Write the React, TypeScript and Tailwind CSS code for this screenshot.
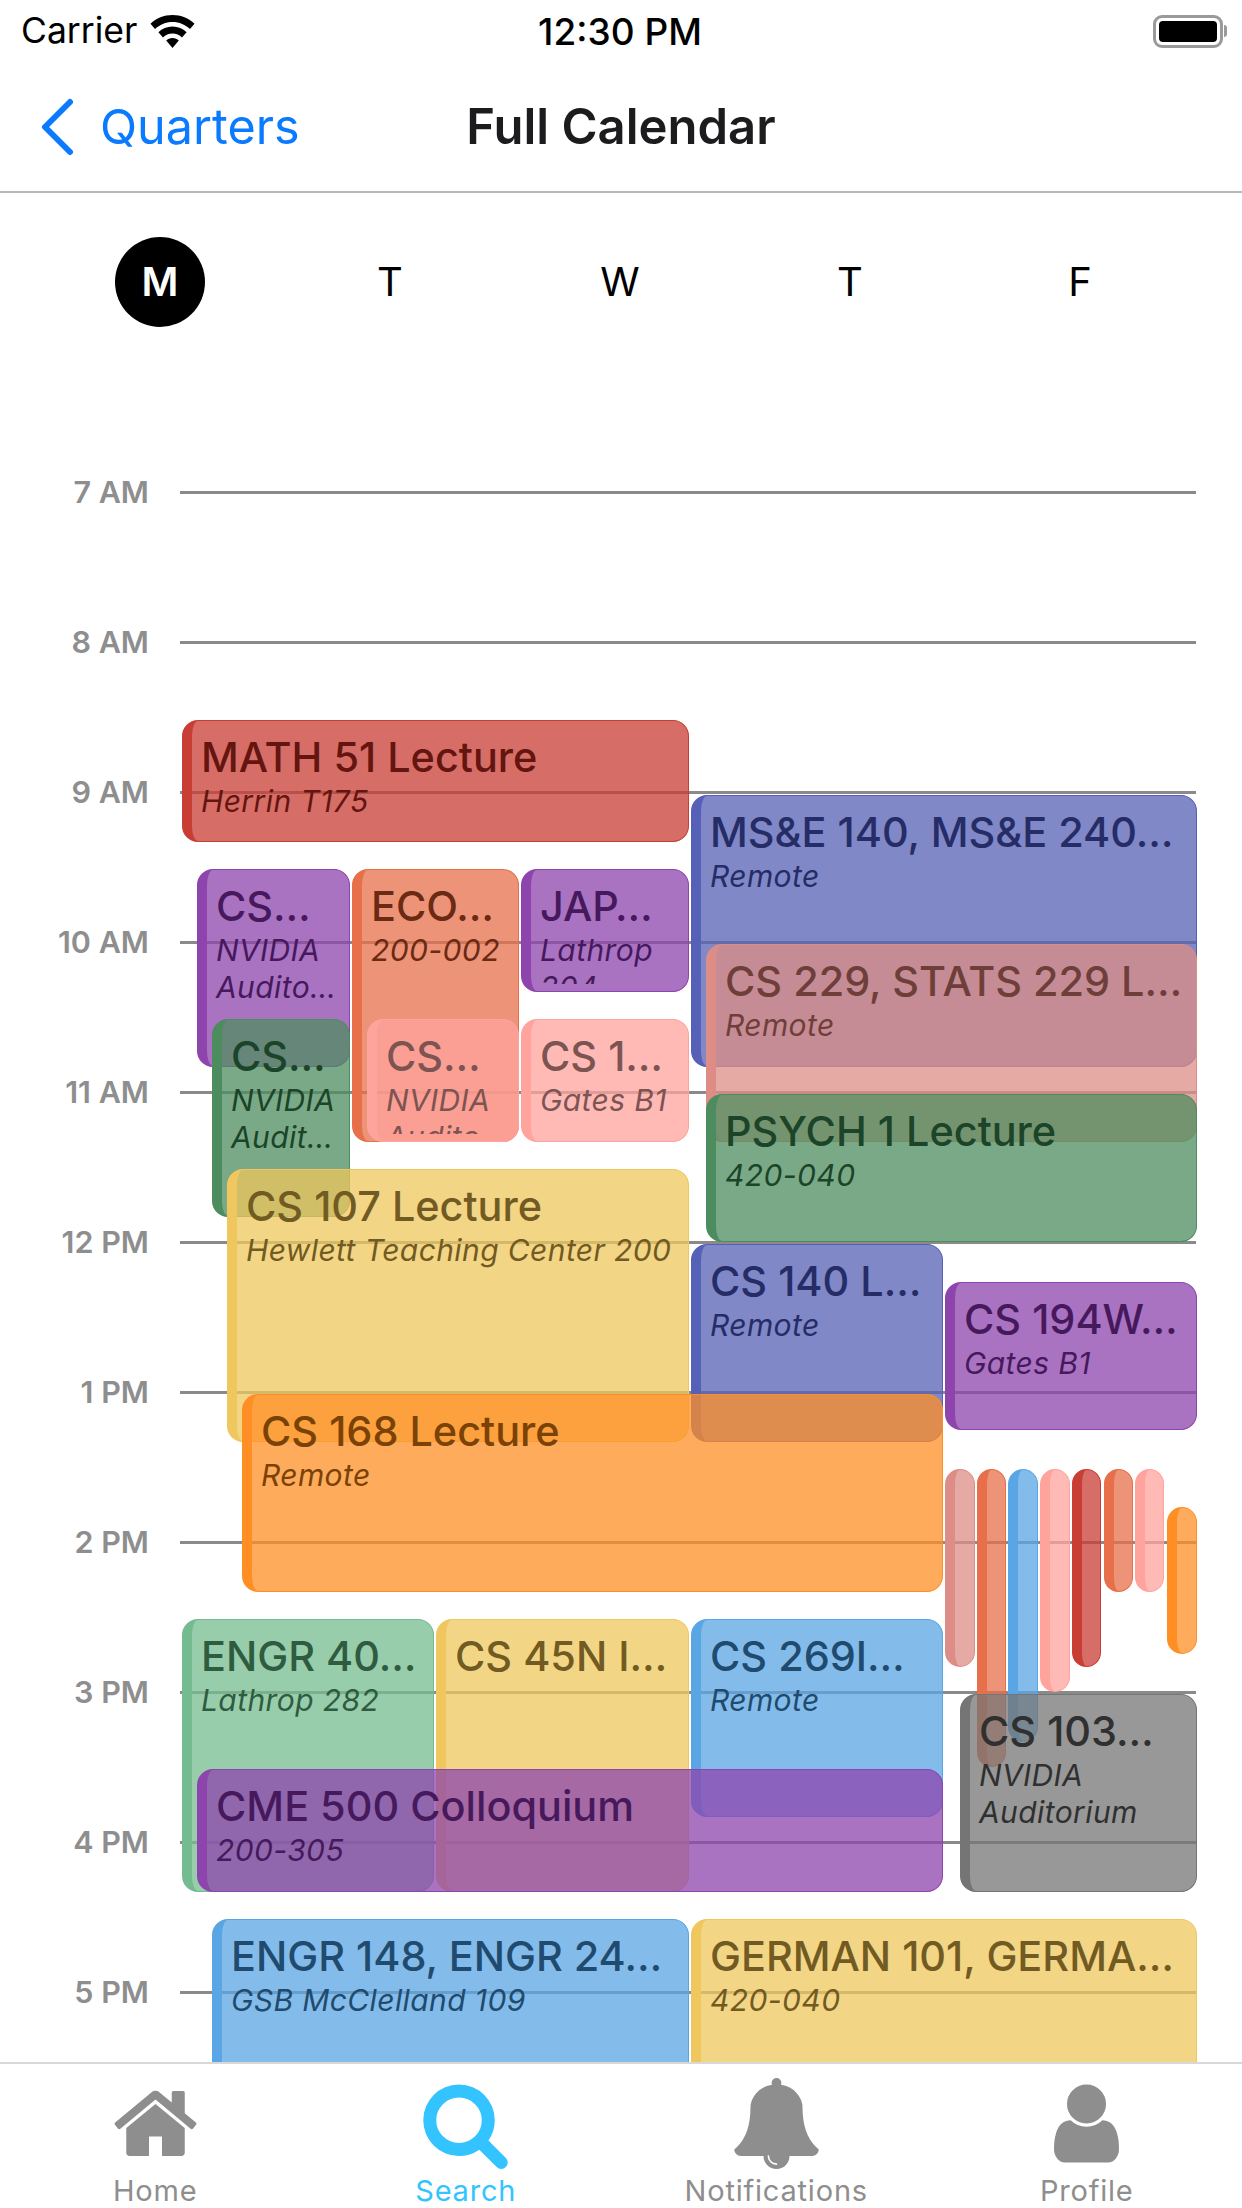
type Tone = { box: string; text: string };

const tones: Record<string, Tone> = {
  red: { box: 'bg-[#C83E34]/75 border-[#C83E34]', text: 'text-[#64150F]' },
  indigo: { box: 'bg-[#5660B6]/75 border-[#5660B6]', text: 'text-[#252C66]' },
  purple: { box: 'bg-[#8E44AD]/75 border-[#8E44AD]', text: 'text-[#46195C]' },
  coral: { box: 'bg-[#E76F4A]/75 border-[#E76F4A]', text: 'text-[#6A2A14]' },
  pink: { box: 'bg-[#FFA39D]/75 border-[#FFA39D]', text: 'text-[#7C5452]' },
  green: { box: 'bg-[#4D8C5F]/75 border-[#4D8C5F]', text: 'text-[#1B4428]' },
  yellow: { box: 'bg-[#EFC75E]/75 border-[#EFC75E]', text: 'text-[#715B22]' },
  dusty: { box: 'bg-[#DD8D86]/75 border-[#DD8D86]', text: 'text-[#6E3F39]' },
  orange: { box: 'bg-[#FF8F25]/75 border-[#FF8F25]', text: 'text-[#7A4207]' },
  mint: { box: 'bg-[#74BC8F]/75 border-[#74BC8F]', text: 'text-[#2F5C40]' },
  sky: { box: 'bg-[#5AA5E3]/75 border-[#5AA5E3]', text: 'text-[#214B6E]' },
  gray: { box: 'bg-[#757575]/75 border-[#757575]', text: 'text-[#303030]' },
};

// left, top, right, bottom in page pixels
type Item = { l: number; t: number; r: number; b: number; tone: string; title?: string; sub?: string[] };

const events: Item[] = [
  { l: 182, t: 720, r: 689, b: 842, tone: 'red', title: 'MATH 51 Lecture', sub: ['Herrin T175'] },
  { l: 691, t: 795, r: 1197, b: 1067, tone: 'indigo', title: 'MS&E 140, MS&E 240…', sub: ['Remote'] },
  { l: 197, t: 869, r: 350, b: 1067, tone: 'purple', title: 'CS…', sub: ['NVIDIA', 'Audito…'] },
  { l: 352, t: 869, r: 519, b: 1142, tone: 'coral', title: 'ECO…', sub: ['200-002'] },
  { l: 521, t: 869, r: 689, b: 992, tone: 'purple', title: 'JAP…', sub: ['Lathrop', '204'] },
  { l: 212, t: 1019, r: 350, b: 1217, tone: 'green', title: 'CS…', sub: ['NVIDIA', 'Audit…'] },
  { l: 367, t: 1019, r: 519, b: 1142, tone: 'pink', title: 'CS…', sub: ['NVIDIA', 'Audito'] },
  { l: 521, t: 1019, r: 689, b: 1142, tone: 'pink', title: 'CS 1…', sub: ['Gates B1'] },
  { l: 706, t: 944, r: 1197, b: 1142, tone: 'dusty', title: 'CS 229, STATS 229 L…', sub: ['Remote'] },
  { l: 706, t: 1094, r: 1197, b: 1242, tone: 'green', title: 'PSYCH 1 Lecture', sub: ['420-040'] },
  { l: 227, t: 1169, r: 689, b: 1442, tone: 'yellow', title: 'CS 107 Lecture', sub: ['Hewlett Teaching Center 200'] },
  { l: 691, t: 1244, r: 943, b: 1442, tone: 'indigo', title: 'CS 140 L…', sub: ['Remote'] },
  { l: 945, t: 1282, r: 1197, b: 1430, tone: 'purple', title: 'CS 194W…', sub: ['Gates B1'] },
  { l: 242, t: 1394, r: 943, b: 1592, tone: 'orange', title: 'CS 168 Lecture', sub: ['Remote'] },
  { l: 945, t: 1469, r: 975, b: 1667, tone: 'dusty' },
  { l: 977, t: 1469, r: 1006, b: 1767, tone: 'coral' },
  { l: 1008, t: 1469, r: 1038, b: 1742, tone: 'sky' },
  { l: 1040, t: 1469, r: 1070, b: 1692, tone: 'pink' },
  { l: 1072, t: 1469, r: 1101, b: 1667, tone: 'red' },
  { l: 1104, t: 1469, r: 1133, b: 1592, tone: 'coral' },
  { l: 1135, t: 1469, r: 1164, b: 1592, tone: 'pink' },
  { l: 1167, t: 1507, r: 1197, b: 1654, tone: 'orange' },
  { l: 960, t: 1694, r: 1197, b: 1892, tone: 'gray', title: 'CS 103…', sub: ['NVIDIA', 'Auditorium'] },
  { l: 182, t: 1619, r: 434, b: 1892, tone: 'mint', title: 'ENGR 40…', sub: ['Lathrop 282'] },
  { l: 436, t: 1619, r: 689, b: 1892, tone: 'yellow', title: 'CS 45N I…' },
  { l: 691, t: 1619, r: 943, b: 1817, tone: 'sky', title: 'CS 269I…', sub: ['Remote'] },
  { l: 197, t: 1769, r: 943, b: 1892, tone: 'purple', title: 'CME 500 Colloquium', sub: ['200-305'] },
  { l: 212, t: 1919, r: 689, b: 2120, tone: 'sky', title: 'ENGR 148, ENGR 24…', sub: ['GSB McClelland 109'] },
  { l: 691, t: 1919, r: 1197, b: 2120, tone: 'yellow', title: 'GERMAN 101, GERMA…', sub: ['420-040'] },
];

const hours = ['7 AM', '8 AM', '9 AM', '10 AM', '11 AM', '12 PM', '1 PM', '2 PM', '3 PM', '4 PM', '5 PM'];
const days = ['M', 'T', 'W', 'T', 'F'];

const CAL_TOP = 342;

function EventCard({ item }: { item: Item }) {
  const tone = tones[item.tone];
  return (
    <div
      className={`absolute flex overflow-hidden rounded-[16px] border-[1.5px] border-l-[10px] ${tone.box}`}
      style={{ left: item.l, top: item.t - CAL_TOP, width: item.r - item.l, height: item.b - item.t }}
    >
      {item.title && (
        <div className={`min-w-0 flex-1 pl-[9px] pt-[11px] mb-[7px] overflow-hidden ${tone.text}`}>
          <div className="whitespace-nowrap text-[41.4px] leading-[51px] font-medium">{item.title}</div>
          {item.sub?.map((line, i) => (
            <div key={i} className="whitespace-nowrap text-[30px] leading-[36.5px] italic tracking-[0.4px]">
              {line}
            </div>
          ))}
        </div>
      )}
    </div>
  );
}

function Wifi() {
  return (
    <svg viewBox="0 0 45 33" className="w-[45px] h-[33px]" fill="black">
      <path d="M22.500 0C14 0 6.300 3.300 0.500 8.700L5 14C9.500 9.600 15.700 6.900 22.500 6.900S35.500 9.600 40 14L44.500 8.700C38.700 3.300 31 0 22.500 0Z" />
      <path d="M22.500 11.500C17 11.500 12.100 13.700 8.400 17.300L13 22.500C15.500 20 18.800 18.500 22.500 18.500S29.500 20 32 22.500L36.600 17.300C32.900 13.700 28 11.500 22.500 11.500Z" />
      <path d="M22.500 23C20 23 17.800 24 16.200 25.600L22.500 33L28.800 25.600C27.200 24 25 23 22.500 23Z" />
    </svg>
  );
}

function Battery() {
  return (
    <div className="flex items-center">
      <div className="w-[70px] h-[33px] rounded-[9px] border-[3px] border-[#9a9a9a] p-[3px]">
        <div className="w-full h-full rounded-[4px] bg-black" />
      </div>
      <div className="ml-[1px] w-[3px] h-[12px] rounded-r-full bg-[#9a9a9a]" />
    </div>
  );
}

function TabIcon({ d, className }: { d: string; className: string }) {
  return (
    <svg viewBox="0 0 1792 1792" className={`w-[91px] h-[91px] ${className}`} fill="currentColor">
      <path d={d} />
    </svg>
  );
}

const tabs = [
  {
    label: 'Home',
    d: 'M1472 992v480q0 26-19 45t-45 19h-384v-384h-256v384h-384q-26 0-45-19t-19-45v-480q0-1 .5-3t.5-3l575-474 575 474q1 2 1 6zm223-69l-62 74q-8 9-21 11h-3q-13 0-21-7l-692-577-692 577q-12 8-24 7-13-2-21-11l-62-74q-8-10-7-23.5t11-21.5l719-599q32-26 76-26t76 26l244 204v-195q0-14 9-23t23-9h192q14 0 23 9t9 23v408l219 182q10 8 11 21.5t-7 23.5z',
  },
  {
    label: 'Search',
    active: true,
    d: 'M1216 832q0-185-131.500-316.500t-316.500-131.500-316.500 131.500-131.500 316.500 131.500 316.500 316.500 131.500 316.500-131.500 131.500-316.500zm512 832q0 52-38 90t-90 38q-54 0-90-38l-343-342q-179 124-399 124-143 0-273.500-55.500t-225-150-150-225-55.500-273.500 55.500-273.500 150-225 225-150 273.500-55.500 273.500 55.500 225 150 150 225 55.500 273.500q0 220-124 399l343 343q37 37 37 90z',
  },
  {
    label: 'Notifications',
    d: 'M912 1696q0-16-16-16-59 0-101.500-42.500t-42.500-101.500q0-16-16-16t-16 16q0 73 51.500 124.500t124.500 51.500q16 0 16-16zm816-288q0 52-38 90t-90 38h-448q0 106-75 181t-181 75-181-75-75-181h-448q-52 0-90-38t-38-90q50-42 91-88t85-119.500 74.500-158.500 50-206 19.500-260q0-152 117-282.500t307-158.500q-8-19-8-39 0-40 28-68t68-28 68 28 28 68q0 20-8 39 190 28 307 158.500t117 282.500q0 139 19.500 260t50 206 74.500 158.500 85 119.500 91 88z',
  },
  {
    label: 'Profile',
    d: 'M1536 1399q0 109-62.500 187t-150.500 78h-854q-88 0-150.500-78t-62.500-187q0-85 8.500-160.500t31.500-152 58.500-131 94-89 134.500-34.500q131 128 313 128t313-128q76 0 134.500 34.500t94 89 58.500 131 31.500 152 8.500 160.500zm-256-887q0 159-112.500 271.500t-271.500 112.500-271.500-112.500-112.500-271.500 112.500-271.500 271.500-112.500 271.500 112.500 112.500 271.500z',
  },
];

export default function App() {
  return (
    <div className="w-[1242px] h-[2208px] flex flex-col bg-white overflow-hidden font-['Inter',sans-serif]">
      {/* status bar */}
      <div className="h-[62px] shrink-0 grid grid-cols-3 items-center pl-[21px] pr-[15px] text-black">
        <div className="flex items-center gap-[13px]">
          <span className="text-[35.5px] leading-none">Carrier</span>
          <Wifi />
        </div>
        <div className="pr-[8px] text-center text-[37px] leading-none font-medium">12:30 PM</div>
        <div className="flex justify-end">
          <Battery />
        </div>
      </div>

      {/* nav bar */}
      <div className="h-[131px] shrink-0 relative flex items-center justify-center border-b-2 border-[#b8b8b8]">
        <div className="absolute left-[40px] top-[36px] flex items-center gap-[26px] text-[#0A7AFF]">
          <svg viewBox="0 0 34 58" className="w-[34px] h-[58px]" fill="none" stroke="currentColor" strokeWidth="6" strokeLinecap="round" strokeLinejoin="round">
            <path d="M30 4L5 29L30 54" />
          </svg>
          <span className="text-[48.5px] leading-none">Quarters</span>
        </div>
        <span className="text-[49px] leading-none font-semibold text-[#1c1c1e]">Full Calendar</span>
      </div>

      {/* week days */}
      <div className="h-[149px] shrink-0 flex px-[45px] pt-[44px]">
        {days.map((d, i) => (
          <div key={i} className="w-[230px] h-[90px] flex items-center justify-center">
            {i === 0 ? (
              <div className="w-[90px] h-[90px] rounded-full bg-black text-white flex items-center justify-center text-[40px] font-semibold">
                {d}
              </div>
            ) : (
              <span className="text-[40px] text-black">{d}</span>
            )}
          </div>
        ))}
      </div>

      {/* calendar */}
      <div className="relative flex-1 overflow-hidden">
        <div className="pt-[75px] flex flex-col">
          {hours.map((h) => (
            <div key={h} className="h-[150px] shrink-0 flex items-center pr-[46px]">
              <span className="w-[149px] text-right text-[30.5px] font-semibold text-[#8e8e8e]">{h}</span>
              <div className="ml-[31px] flex-1 h-[3px] bg-[#8a8a8a]" />
            </div>
          ))}
        </div>
        {events.map((item, i) => (
          <EventCard key={i} item={item} />
        ))}
      </div>

      {/* tab bar */}
      <div className="h-[146px] shrink-0 grid grid-cols-4 border-t-2 border-[#d8d8d8] bg-white">
        {tabs.map((t) => (
          <div key={t.label} className="flex flex-col items-center pt-[14px]">
            <TabIcon d={t.d} className={t.active ? 'text-[#33C4FF]' : 'text-[#8e8e8e]'} />
            <span className={`mt-[4px] text-[29px] leading-[36px] tracking-[0.8px] ${t.active ? 'text-[#33C4FF]' : 'text-[#8e8e8e]'}`}>
              {t.label}
            </span>
          </div>
        ))}
      </div>
    </div>
  );
}
